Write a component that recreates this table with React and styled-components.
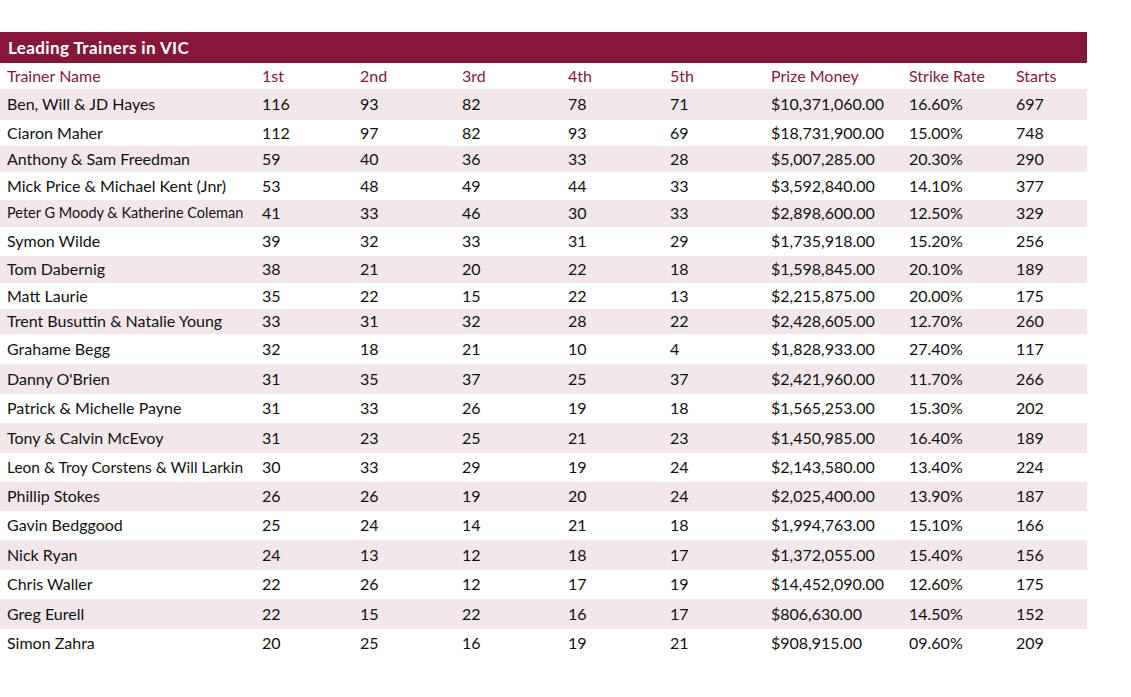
import React from 'react';
import styled, { createGlobalStyle } from 'styled-components';

const GlobalStyle = createGlobalStyle`
  html, body { margin: 0; padding: 0; background: #fff; }
  body { font-family: Lato, "Liberation Sans", sans-serif; }
`;

const cols = ["Trainer Name", "1st", "2nd", "3rd", "4th", "5th", "Prize Money", "Strike Rate", "Starts"];

// name, 1st..5th, prize, strike, starts, row height, name size
const trainers = [
  ["Ben, Will & JD Hayes", 116, 93, 82, 78, 71, "$10,371,060.00", "16.60%", 697, 31],
  ["Ciaron Maher", 112, 97, 82, 93, 69, "$18,731,900.00", "15.00%", 748, 26],
  ["Anthony & Sam Freedman", 59, 40, 36, 33, 28, "$5,007,285.00", "20.30%", 290, 26],
  ["Mick Price & Michael Kent (Jnr)", 53, 48, 49, 44, 33, "$3,592,840.00", "14.10%", 377, 28],
  ["Peter G Moody & Katherine Coleman", 41, 33, 46, 30, 33, "$2,898,600.00", "12.50%", 329, 27, 14.5],
  ["Symon Wilde", 39, 32, 33, 31, 29, "$1,735,918.00", "15.20%", 256, 29],
  ["Tom Dabernig", 38, 21, 20, 22, 18, "$1,598,845.00", "20.10%", 189, 27],
  ["Matt Laurie", 35, 22, 15, 22, 13, "$2,215,875.00", "20.00%", 175, 26],
  ["Trent Busuttin & Natalie Young", 33, 31, 32, 28, 22, "$2,428,605.00", "12.70%", 260, 25],
  ["Grahame Begg", 32, 18, 21, 10, 4, "$1,828,933.00", "27.40%", 117, 30],
  ["Danny O'Brien", 31, 35, 37, 25, 37, "$2,421,960.00", "11.70%", 266, 30],
  ["Patrick & Michelle Payne", 31, 33, 26, 19, 18, "$1,565,253.00", "15.30%", 202, 29],
  ["Tony & Calvin McEvoy", 31, 23, 25, 21, 23, "$1,450,985.00", "16.40%", 189, 30],
  ["Leon & Troy Corstens & Will Larkin", 30, 33, 29, 19, 24, "$2,143,580.00", "13.40%", 224, 29, 15.5],
  ["Phillip Stokes", 26, 26, 19, 20, 24, "$2,025,400.00", "13.90%", 187, 29],
  ["Gavin Bedggood", 25, 24, 14, 21, 18, "$1,994,763.00", "15.10%", 166, 29],
  ["Nick Ryan", 24, 13, 12, 18, 17, "$1,372,055.00", "15.40%", 156, 30],
  ["Chris Waller", 22, 26, 12, 17, 19, "$14,452,090.00", "12.60%", 175, 29],
  ["Greg Eurell", 22, 15, 22, 16, 17, "$806,630.00", "14.50%", 152, 30],
  ["Simon Zahra", 20, 25, 16, 19, 21, "$908,915.00", "09.60%", 209, 29],
];

const Page = styled.div`
  padding-top: 32px;
  width: 1087px;
`;

const Title = styled.div`
  height: 31px;
  background: #85173a;
  color: #fff;
  font-weight: 700;
  font-size: 17px;
  letter-spacing: 0.4px;
  display: flex;
  align-items: center;
  padding-left: 8px;
`;

const Row = styled.div`
  display: grid;
  grid-template-columns: 255px 98px 102px 106px 102px 101px 138px 107px 1fr;
  align-items: center;
  box-sizing: border-box;
  padding-bottom: 2px;
  height: ${p => p.$h}px;
  background: ${p => (p.$shade ? '#f3e7eb' : '#fff')};
  color: ${p => (p.$head ? '#85173a' : '#111')};
  font-size: 16px;
`;

const Cell = styled.div`
  padding-left: 7px;
  white-space: nowrap;
  font-size: ${p => (p.$size ? `${p.$size}px` : 'inherit')};
`;

export default function App() {
  return (
    <Page>
      <GlobalStyle />
      <Title>Leading Trainers in VIC</Title>
      <Row $head $h={26}>
        {cols.map(c => <Cell key={c}>{c}</Cell>)}
      </Row>
      {trainers.map((t, i) => (
        <Row key={t[0]} $shade={i % 2 === 0} $h={t[9]}>
          {t.slice(0, 9).map((v, j) => (
            <Cell key={j} $size={j === 0 ? t[10] : undefined}>{v}</Cell>
          ))}
        </Row>
      ))}
    </Page>
  );
}
